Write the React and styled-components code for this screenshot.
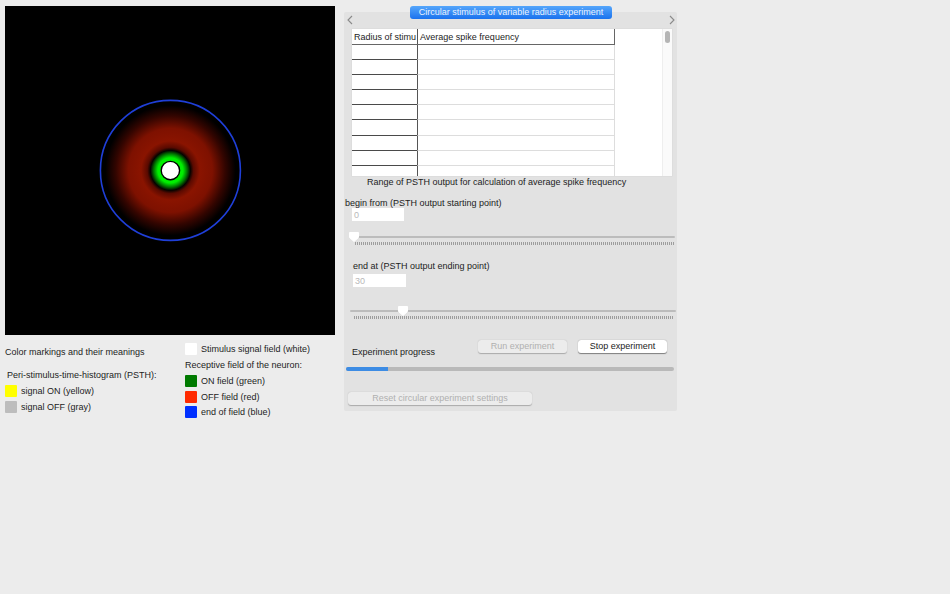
import React from "react";
import styled, { createGlobalStyle } from "styled-components";

const Global = createGlobalStyle`
  html, body { margin: 0; padding: 0; background: #ececec; }
  body { font-family: "Liberation Sans", Arial, sans-serif; font-size: 9px; color: #1c1c1c; }
`;

const Page = styled.div`
  width: 950px; height: 594px; display: flex; align-items: flex-start; overflow: hidden;
  padding: 6px 0 0 5px; box-sizing: border-box;
`;
const LeftColumn = styled.div`width: 330px; flex: none;`;
const Stage = styled.svg`display: block; width: 330px; height: 329px; background: #000;`;
const Legend = styled.div`display: flex; margin-top: 8px;`;
const LegendLeft = styled.div`width: 180px; flex: none; padding-top: 3px;`;
const LegendRight = styled.div`display: flex; flex-direction: column;`;
const Label = styled.div`
  line-height: 12px; white-space: nowrap;
  margin: ${(p) => p.$m || 0};
`;
const Item = styled.div`
  display: flex; align-items: center; gap: 4px; height: 13px; white-space: nowrap;
  margin-top: ${(p) => p.$mt || 0}px;
`;
const Swatch = styled.span`
  width: 12px; height: 12px; flex: none; background: ${(p) => p.$c};
  border-radius: 1px;
`;

const Panel = styled.div`
  position: relative; flex: none; width: 333px; height: 399px; margin: 6px 0 0 9px;
  background: #e2e2e2; border-radius: 2px; box-sizing: border-box;
`;
const TabButton = styled.div`
  position: absolute; left: 66px; top: -6px; width: 202px; height: 13px;
  border-radius: 3px; background: linear-gradient(#55a6fb, #1a72ee);
  color: #eaf3ff; text-align: center; line-height: 13px; white-space: nowrap;
`;
const Chevrons = styled.div`
  height: 17px; display: flex; justify-content: space-between; align-items: flex-start;
  padding: 3px 1px 0 2px; box-sizing: border-box;
`;
const Chevron = styled.svg`width: 8px; height: 10px; display: block; fill: none; stroke: #8a8a8a; stroke-width: 1.1;`;
const TableWrap = styled.div`
  margin-left: 8px; width: 320px; height: 147px; background: #fff; display: flex; overflow: hidden;
  box-shadow: 0 0 0 0.5px #d8d8d8;
`;
const Table = styled.div`width: 263px; flex: none; overflow: hidden;`;
const HeadRow = styled.div`
  display: grid; grid-template-columns: 65px 198px; height: 16px; box-sizing: border-box;
  border-bottom: 1px solid #666; line-height: 16px;
`;
const HeadCell = styled.div`
  padding-left: 2px; white-space: nowrap; overflow: hidden;
  border-left: ${(p) => (p.$first ? "none" : "1px solid #555")};
  border-right: ${(p) => (p.$first ? "none" : "1px solid #666")};
`;
const Row = styled.div`display: grid; grid-template-columns: 65px 198px; height: 15.1px;`;
const KeyCell = styled.div`border-bottom: 1px solid #4a4a4a; box-sizing: border-box;`;
const ValueCell = styled.div`
  border-left: 1px solid #555; border-right: 1px solid #ddd; border-bottom: 1px solid #ddd; box-sizing: border-box;
`;
const Scrollbar = styled.div`
  margin-left: 47px; width: 10px; flex: none; background: #fafafa; border-left: 1px solid #eee;
  box-sizing: border-box; padding: 2px 0 0 2px;
`;
const Thumb = styled.div`width: 5px; height: 12px; border-radius: 3px; background: #b5b5b5;`;
const RangeTitle = styled.div`margin: 0 0 0 23px; line-height: 12px;`;
const FieldLabel = styled.div`line-height: 12px; margin: ${(p) => p.$m};`;
const Field = styled.div`
  background: #fff; color: #b9b9b9; box-sizing: border-box; padding-left: 2px;
  width: ${(p) => p.$w}px; height: 13px; line-height: 14px; margin: ${(p) => p.$m};
`;
const Slider = styled.div`
  position: relative; height: 16px; margin: ${(p) => p.$m}; width: ${(p) => p.$w}px;
`;
const Track = styled.div`
  position: absolute; left: 0; right: 0; top: 3px; height: 2px; background: #bcbcbc; border-radius: 1px;
`;
const Ticks = styled.div`
  position: absolute; left: ${(p) => p.$l}px; right: ${(p) => p.$r}px; top: 9px; height: 3px;
  background: repeating-linear-gradient(90deg, #9d9d9d 0 1px, transparent 1px 2px);
`;
const Knob = styled.svg`position: absolute; top: -2px; width: 12px; height: 12px; display: block;`;
const ProgressHead = styled.div`
  display: flex; align-items: flex-start; margin: 17px 0 0 0; height: 22px;
`;
const ProgressLabel = styled.div`margin: 6px 0 0 8px; width: 126px; line-height: 12px; flex: none;`;
const Button = styled.div`
  height: 13px; line-height: 13px; text-align: center; border-radius: 3px; box-sizing: border-box;
  flex: none; width: ${(p) => p.$w}px; margin-left: ${(p) => p.$ml || 0}px;
  background: ${(p) => (p.$on ? "#fff" : "#ececec")};
  color: ${(p) => (p.$on ? "#1c1c1c" : "#b0b0b0")};
  box-shadow: 0 0.5px 1px rgba(0,0,0,${(p) => (p.$on ? 0.45 : 0.25)});
`;
const Progress = styled.div`
  margin: 5px 0 0 2px; width: 328px; height: 4px; border-radius: 2px; background: #b9b9b9; overflow: hidden;
`;
const Fill = styled.div`height: 100%; background: #3d8ce4;`;
const ResetRow = styled.div`margin: 21px 0 0 4px;`;

const Marker = ({ left }) => (
  <Knob viewBox="0 0 12 12" style={{ left }}>
    <path d="M1.5 1.5 h9 v5 L6 10.5 L1.5 6.5z" fill="#fff" stroke="#fff" strokeLinejoin="round" />
  </Knob>
);

export default function App() {
  return (
    <>
      <Global />
      <Page>
        <LeftColumn>
          <Stage viewBox="0 0 330 329">
            <defs>
              <radialGradient id="rf" gradientUnits="userSpaceOnUse" cx="165.4" cy="164.4" r="70">
                <stop offset="0" stopColor="#00ff00" />
                <stop offset="0.18" stopColor="#00ee00" />
                <stop offset="0.24" stopColor="#007000" />
                <stop offset="0.285" stopColor="#040400" />
                <stop offset="0.33" stopColor="#5a0a00" />
                <stop offset="0.42" stopColor="#8a1400" />
                <stop offset="0.6" stopColor="#7e1100" />
                <stop offset="0.78" stopColor="#330500" />
                <stop offset="0.93" stopColor="#000" />
              </radialGradient>
            </defs>
            <circle cx="165.4" cy="164.4" r="70" fill="url(#rf)" stroke="#1f3fd8" strokeWidth="1.6" />
            <circle cx="165.4" cy="164.6" r="9.2" fill="#fff" stroke="#000" strokeWidth="1.4" />
          </Stage>
          <Legend>
            <LegendLeft>
              <Label>Color markings and their meanings</Label>
              <Label $m="11px 0 0 2px">Peri-stimulus-time-histogram (PSTH):</Label>
              <Item $mt={3}><Swatch $c="#ffff00" />signal ON (yellow)</Item>
              <Item $mt={3}><Swatch $c="#bdbdbd" />signal OFF (gray)</Item>
            </LegendLeft>
            <LegendRight>
              <Item $mt={-1}><Swatch $c="#ffffff" />Stimulus signal field (white)</Item>
              <Label $m="4px 0 0 0">Receptive field of the neuron:</Label>
              <Item $mt={3}><Swatch $c="#007a00" />ON field (green)</Item>
              <Item $mt={3}><Swatch $c="#ff2a00" />OFF field (red)</Item>
              <Item $mt={2}><Swatch $c="#0030ff" />end of field (blue)</Item>
            </LegendRight>
          </Legend>
        </LeftColumn>
        <Panel>
          <TabButton>Circular stimulus of variable radius experiment</TabButton>
          <Chevrons>
            <Chevron viewBox="0 0 8 10"><path d="M6 1 L2 5 L6 9" /></Chevron>
            <Chevron viewBox="0 0 8 10"><path d="M2 1 L6 5 L2 9" /></Chevron>
          </Chevrons>
          <TableWrap>
            <Table>
              <HeadRow>
                <HeadCell $first>Radius of stimu</HeadCell>
                <HeadCell>Average spike frequency</HeadCell>
              </HeadRow>
              {Array.from({ length: 9 }, (_, i) => (
                <Row key={i}><KeyCell /><ValueCell /></Row>
              ))}
            </Table>
            <Scrollbar><Thumb /></Scrollbar>
          </TableWrap>
          <RangeTitle>Range of PSTH output for calculation of average spike frequency</RangeTitle>
          <FieldLabel $m="9px 0 0 1px">begin from (PSTH output starting point)</FieldLabel>
          <Field $w={52} $m="-1px 0 0 8px">0</Field>
          <Slider $w={322} $m="12px 0 0 9px">
            <Track />
            <Ticks $l={2} $r={1} />
            <Marker left={-5} />
          </Slider>
          <FieldLabel $m="11px 0 0 9px">end at (PSTH output ending point)</FieldLabel>
          <Field $w={53} $m="2px 0 0 9px">30</Field>
          <Slider $w={326} $m="20px 0 0 6px">
            <Track />
            <Ticks $l={4} $r={3} />
            <Marker left={47} />
          </Slider>
          <ProgressHead>
            <ProgressLabel>Experiment progress</ProgressLabel>
            <Button $w={89}>Run experiment</Button>
            <Button $w={89} $ml={11} $on>Stop experiment</Button>
          </ProgressHead>
          <Progress><Fill style={{ width: "12.8%" }} /></Progress>
          <ResetRow><Button $w={184}>Reset circular experiment settings</Button></ResetRow>
        </Panel>
      </Page>
    </>
  );
}
